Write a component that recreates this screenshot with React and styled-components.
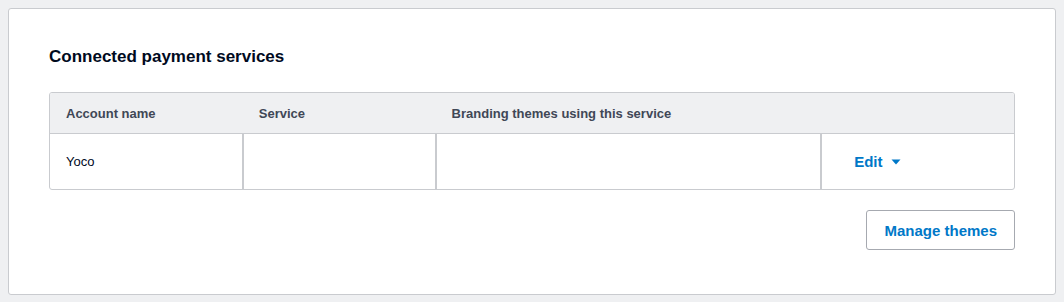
import styled, { createGlobalStyle } from "styled-components";

const GlobalStyle = createGlobalStyle`
  html, body {
    margin: 0;
    background: #eff0f2;
  }
  body {
    padding: 8px;
    font-family: "Liberation Sans", Arial, Helvetica, sans-serif;
    color: #000a1e;
  }
`;

const columns = [
  { key: "account", label: "Account name" },
  { key: "service", label: "Service" },
  { key: "themes", label: "Branding themes using this service" },
  { key: "actions", label: "" },
];

const rows = [{ id: 1, account: "Yoco", service: "", themes: "" }];

const Caret = () => (
  <svg width="10" height="6" viewBox="0 0 10 6" aria-hidden="true">
    <path d="M0.5 0.5 H9.5 L5 5.5 Z" fill="currentColor" />
  </svg>
);

export default function App() {
  return (
    <>
      <GlobalStyle />
      <Card>
        <Title>Connected payment services</Title>
        <Table>
          <HeaderRow>
            {columns.map((col) => (
              <HeaderCell key={col.key}>{col.label}</HeaderCell>
            ))}
          </HeaderRow>
          {rows.map((row) => (
            <BodyRow key={row.id}>
              <BodyCell>{row.account}</BodyCell>
              <BodyCell>{row.service}</BodyCell>
              <BodyCell>{row.themes}</BodyCell>
              <BodyCell>
                <EditButton type="button">
                  Edit
                  <Caret />
                </EditButton>
              </BodyCell>
            </BodyRow>
          ))}
        </Table>
        <Footer>
          <OutlineButton type="button">Manage themes</OutlineButton>
        </Footer>
      </Card>
    </>
  );
}

const Card = styled.section`
  box-sizing: border-box;
  display: flex;
  flex-direction: column;
  background: #fff;
  border: 1px solid #c9cbcf;
  border-radius: 3px;
  padding: 36px 40px 44px;
`;

const Title = styled.h2`
  margin: 0 0 23px;
  font-size: 17px;
  line-height: 24px;
  font-weight: 700;
  color: #000a1e;
`;

const Table = styled.div`
  border: 1px solid #c9cbcf;
  border-radius: 3px;
  overflow: hidden;
`;

const HeaderRow = styled.div`
  display: grid;
  grid-template-columns: 2fr 2fr 4fr 2fr;
  height: 40px;
  background: #eff0f2;
  border-bottom: 1px solid #c9cbcf;
`;

const HeaderCell = styled.div`
  display: flex;
  align-items: center;
  padding: 0 16px;
  font-size: 13px;
  font-weight: 700;
  color: #404756;
  white-space: nowrap;
`;

const BodyRow = styled.div`
  display: grid;
  grid-template-columns: 2fr 2fr 4fr 2fr;
  height: 55px;
`;

const BodyCell = styled.div`
  display: flex;
  align-items: center;
  padding: 0 16px;
  font-size: 13px;
  color: #000a1e;
  border-left: 1px solid #c9cbcf;
  border-right: 1px solid #c9cbcf;

  &:first-child {
    border-left: none;
  }
  &:last-child {
    border-right: none;
  }
`;

const EditButton = styled.button`
  display: inline-flex;
  align-items: center;
  gap: 8px;
  height: 40px;
  padding: 0 16px;
  border: none;
  background: none;
  font-family: inherit;
  font-size: 15px;
  font-weight: 700;
  color: #0078c8;
  cursor: pointer;
`;

const Footer = styled.div`
  display: flex;
  justify-content: flex-end;
  margin-top: 20px;
`;

const OutlineButton = styled.button`
  box-sizing: border-box;
  height: 40px;
  padding: 0 17px;
  border: 1px solid #a6a9b0;
  border-radius: 3px;
  background: #fff;
  font-family: inherit;
  font-size: 15px;
  font-weight: 700;
  color: #0078c8;
  cursor: pointer;
`;
